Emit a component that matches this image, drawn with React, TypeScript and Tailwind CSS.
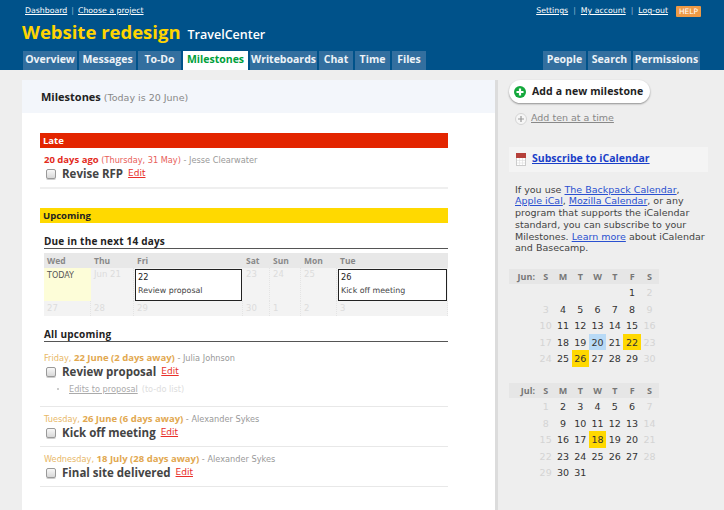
const F = "font-['DejaVu_Sans',sans-serif]";

function Tab({ label, w, active }: { label: string; w: number; active?: boolean }) {
  return (
    <div
      style={{ width: w }}
      className={
        active
          ? "h-[19px] bg-white text-[#00a03c] font-['Open_Sans',sans-serif] font-bold text-[10.5px] leading-[17px] text-center"
          : "h-[19px] bg-[#336f9f] text-[#eef3f7] font-['Open_Sans',sans-serif] font-bold text-[10.5px] leading-[17px] text-center"
      }
    >
      {label}
    </div>
  );
}

function Check() {
  return <div className="w-[10px] h-[10px] rounded-[2px] border border-[#999] bg-gradient-to-b from-[#f8f8f8] to-[#d8d8d8] shadow-[0_1px_0_#ccc]" />;
}

function Item({
  when,
  bold,
  rest,
  who,
  title,
  late,
  children,
  h,
}: {
  when: string;
  bold: string;
  rest?: string;
  who: string;
  title: string;
  late?: boolean;
  children?: React.ReactNode;
  h: number;
}) {
  return (
    <div style={{ height: h }} className={(late ? "border-b-2 border-[#efefef]" : "border-b border-[#e8e8e8]") + " pl-[4px] pt-[6px]"}>
      <div className="text-[8.2px] leading-[12px] whitespace-nowrap text-[#999]">
        <span className={late ? "text-[#e8403a]" : "text-[#e8b868]"}>{when}</span>
        <span className={late ? "text-[#e32b1d] font-['Open_Sans',sans-serif] font-bold text-[9.5px]" : "text-[#e2a850] font-['Open_Sans',sans-serif] font-bold text-[9.5px]"}>{bold}</span>
        {rest && <span className={late ? "text-[#e8605a]" : ""}>{rest}</span>}
        <span> - {who}</span>
      </div>
      <div className="flex items-center h-[16px]">
        <div className="ml-[2px] w-[16px] flex-none">
          <Check />
        </div>
        <span className="font-['Open_Sans',sans-serif] text-[11.5px] font-bold text-[#444] whitespace-nowrap">{title}</span>
        <a className="ml-[5px] text-[9px] text-[#e8302a] underline">Edit</a>
      </div>
      {children}
    </div>
  );
}

function MiniCal({ label, rows, mb }: { label: string; rows: (string | [string, string])[][]; mb?: number }) {
  const heads = ["S", "M", "T", "W", "T", "F", "S"];
  return (
    <div style={{ marginBottom: mb }} className="w-[150px]">
      <div className="flex h-[15px] bg-[#e6e6e6] items-center text-[9px] font-['Open_Sans',sans-serif] font-bold text-[#777]">
        <div className="w-[28px] text-right flex-none pr-[2px]">{label}</div>
        {heads.map((d, i) => (
          <div key={i} className="w-[17.3px] flex-none text-center">
            {d}
          </div>
        ))}
      </div>
      {rows.map((r, i) => (
        <div key={i} className="flex h-[16.5px] items-center text-[9.5px] text-[#333]">
          <div className="w-[28px] flex-none" />
          {r.map((c, j) => {
            const val = Array.isArray(c) ? c[0] : c;
            const hl = Array.isArray(c) ? c[1] : "";
            return (
              <div
                key={j}
                className={
                  "w-[17.3px] h-[16.5px] leading-[17px] flex-none text-center " +
                  (hl === "y" ? "bg-[#ffd800] " : hl === "b" ? "bg-[#b8daf6] " : "") +
                  (j === 0 || j === 6 ? "text-[#d4d4d4]" : "")
                }
              >
                {val}
              </div>
            );
          })}
        </div>
      ))}
    </div>
  );
}

const jun: (string | [string, string])[][] = [
  ["", "", "", "", "", "1", "2"],
  ["3", "4", "5", "6", "7", "8", "9"],
  ["10", "11", "12", "13", "14", "15", "16"],
  ["17", "18", "19", ["20", "b"], "21", ["22", "y"], "23"],
  ["24", "25", ["26", "y"], "27", "28", "29", "30"],
];
const jul: (string | [string, string])[][] = [
  ["1", "2", "3", "4", "5", "6", "7"],
  ["8", "9", "10", "11", "12", "13", "14"],
  ["15", "16", "17", ["18", "y"], "19", "20", "21"],
  ["22", "23", "24", "25", "26", "27", "28"],
  ["29", "30", "31", "", "", "", ""],
];

function CalCell({ t, cls }: { t: string; cls?: string }) {
  return <div className={"border-r border-dotted border-[#e4e4e4] bg-[#f3f3f3] text-[#dcdcdc] text-[8.5px] px-[3px] " + (cls || "")}>{t}</div>;
}

function EventCell({ n, t }: { n: string; t: string }) {
  return (
    <div className="border border-[#222] bg-white mx-px mt-px h-[32px] px-[2px] text-[7.9px] leading-[14px] text-[#444]">
      <div className="text-[#222] text-[8.2px]">{n}</div>
      <div>{t}</div>
    </div>
  );
}

export default function App() {
  return (
    <div className={F + " w-[724px] h-[510px] overflow-hidden bg-[#eeeeee]"}>
      <header className="h-[70px] bg-[#00528a] relative flex flex-col">
        <div className="flex justify-between h-[19px] pl-[25px] pr-[23px] pt-[5px] text-[7.8px] leading-[12px] text-white">
          <div className="flex gap-[4px]">
            <a className="underline">Dashboard</a>
            <span className="text-[#8fb3cf]">|</span>
            <a className="underline">Choose a project</a>
          </div>
          <div className="flex gap-[5px] items-start">
            <a className="underline">Settings</a>
            <span className="text-[#8fb3cf]">|</span>
            <a className="underline">My account</a>
            <span className="text-[#8fb3cf]">|</span>
            <a className="underline">Log-out</a>
            <span className="ml-[3px] mt-[1px] w-[25px] h-[11px] rounded-[1px] bg-[#ee9a45] text-[7.5px] leading-[11px] text-center text-[#fff]">HELP</span>
          </div>
        </div>
        <div className="flex items-baseline pl-[22px] h-[32px] font-['Open_Sans',sans-serif] font-bold">
          <span className="text-[18.5px] leading-[26px] text-[#ffd400] whitespace-nowrap">Website redesign</span>
          <span className="ml-[7px] text-[12.5px] font-semibold text-white whitespace-nowrap">TravelCenter</span>
        </div>
        <nav className="flex justify-between pl-[23px] pr-[24px]">
          <div className="flex gap-[2px]">
            <Tab label="Overview" w={54} />
            <Tab label="Messages" w={57} />
            <Tab label="To-Do" w={43} />
            <Tab label="Milestones" w={65} active />
            <Tab label="Writeboards" w={67} />
            <Tab label="Chat" w={34} />
            <Tab label="Time" w={35} />
            <Tab label="Files" w={34} />
          </div>
          <div className="flex gap-[2px]">
            <Tab label="People" w={43} />
            <Tab label="Search" w={43} />
            <Tab label="Permissions" w={67} />
          </div>
        </nav>
      </header>

      <div className="flex pt-[10px] pl-[22px]">
        <main className="w-[473px] h-[430px] bg-white flex-none">
          <div className="h-[33px] bg-[#f3f6fb] pl-[19px] pt-[10px] text-[10.5px] leading-[14px] whitespace-nowrap">
            <span className="font-['Open_Sans',sans-serif] font-bold text-[11px] text-[#222]">Milestones</span>
            <span className="text-[#888] text-[9.5px]"> (Today is 20 June)</span>
          </div>
          <div className="pl-[18px] w-[426px]">
            <div className="mt-[20px] h-[15px] bg-[#e32500] text-white font-['Open_Sans',sans-serif] text-[9.5px] font-bold leading-[15px] pl-[3px]">Late</div>
            <Item when="" bold="20 days ago" rest=" (Thursday, 31 May)" who="Jesse Clearwater" title="Revise RFP" late h={41} />
            <div className="mt-[19px] h-[15px] bg-[#ffd900] text-[#222] font-['Open_Sans',sans-serif] text-[9.5px] font-bold leading-[15px] pl-[3px]">Upcoming</div>
            <div className="mt-[5px] ml-[4px] h-[21px] flex items-end border-b border-[#555] font-['Open_Sans',sans-serif] text-[10px] tracking-[0.2px] font-bold leading-[14px] text-[#222]">Due in the next 14 days</div>
            <div className="ml-[4px] mt-[4px] grid grid-cols-[47px_43px_109px_27px_31px_36px_111px] grid-rows-[15px_33px_15px] text-[9px]">
              {["Wed", "Thu", "Fri", "Sat", "Sun", "Mon", "Tue"].map((d) => (
                <div key={d} className="bg-[#e8e8e8] text-[#888] px-[3px] leading-[15px] text-[8.5px] font-['Open_Sans',sans-serif] font-bold">
                  {d}
                </div>
              ))}
              <div className="bg-[#fdfdd8] text-[#555] text-[8px] pl-[3px] pt-[2px]">TODAY</div>
              <CalCell t="Jun 21" />
              <div className="bg-[#f3f3f3]">
                <EventCell n="22" t="Review proposal" />
              </div>
              <CalCell t="23" />
              <CalCell t="24" />
              <CalCell t="25" />
              <div className="bg-[#f3f3f3]">
                <EventCell n="26" t="Kick off meeting" />
              </div>
              {["27", "28", "29", "30", "1", "2", "3"].map((d) => (
                <CalCell key={d} t={d} cls="leading-[15px]" />
              ))}
            </div>
            <div className="mt-[6px] ml-[4px] h-[20px] flex items-end border-b border-[#555] font-['Open_Sans',sans-serif] text-[10px] tracking-[0.2px] font-bold leading-[14px] text-[#222]">All upcoming</div>
            <div className="mt-[4px]">
              <Item when="Friday, " bold="22 June (2 days away)" who="Julia Johnson" title="Review proposal" h={61}>
                <div className="flex items-center h-[14px] mt-[2px] text-[8.2px] whitespace-nowrap pl-[13px]">
                  <span className="w-[2px] h-[2px] bg-[#ccc] mr-[10px]" />
                  <a className="underline text-[#aaa]">Edits to proposal</a>
                  <span className="text-[#ddd] ml-[4px]">(to-do list)</span>
                </div>
              </Item>
              <Item when="Tuesday, " bold="26 June (6 days away)" who="Alexander Sykes" title="Kick off meeting" h={40} />
              <Item when="Wednesday, " bold="18 July (28 days away)" who="Alexander Sykes" title="Final site delivered" h={40} />
            </div>
          </div>
        </main>

        <aside className="w-[226px] flex-none h-[430px] border-l-[3px] border-[#dcdcdc] pl-[11px]">
          <div className="inline-flex items-center h-[23px] w-[141px] rounded-full bg-white shadow-[0_1px_2px_rgba(0,0,0,0.4)] pl-[5px]">
            <svg width="12" height="12" viewBox="0 0 12 12" className="flex-none">
              <circle cx="6" cy="6" r="6" fill="#14a83c" />
              <path d="M6 2.5v7M2.5 6h7" stroke="#fff" strokeWidth="2.2" />
            </svg>
            <span className="ml-[6px] font-['Open_Sans',sans-serif] text-[10.5px] tracking-[0.1px] font-bold text-[#222] whitespace-nowrap">Add a new milestone</span>
          </div>
          <div className="flex items-center mt-[7px] ml-[6px] h-[14px]">
            <svg width="12" height="12" viewBox="0 0 12 12" className="flex-none">
              <circle cx="6" cy="6" r="5.5" fill="#f6f6f6" stroke="#d4d4d4" />
              <path d="M6 3v6M3 6h6" stroke="#999" strokeWidth="1.2" />
            </svg>
            <a className="ml-[4px] text-[9.5px] text-[#888] underline whitespace-nowrap">Add ten at a time</a>
          </div>
          <div className="mt-[21px] w-[199px] h-[25px] bg-[#f4f4f4] flex items-center pl-[7px]">
            <svg width="10" height="13" viewBox="0 0 10 13" className="flex-none">
              <rect x="0.5" y="0.5" width="9" height="12" fill="#fff" stroke="#ccc" />
              <rect x="0" y="0" width="10" height="5" fill="#b5403a" />
              <path d="M1 7.5h8M1 10h8M3.5 5v7M6.5 5v7" stroke="#ddd" strokeWidth="0.6" />
            </svg>
            <a className="ml-[6px] font-['Open_Sans',sans-serif] text-[10.5px] font-bold text-[#1a3fc8] underline whitespace-nowrap">Subscribe to iCalendar</a>
          </div>
          <p className="mt-[12px] ml-[6px] w-[200px] text-[9.5px] leading-[11.8px] text-[#444] whitespace-nowrap">
            If you use <a className="text-[#2a50d0] underline">The Backpack Calendar</a>,
            <br />
            <a className="text-[#2a50d0] underline">Apple iCal</a>, <a className="text-[#2a50d0] underline">Mozilla Calendar</a>, or any
            <br />
            program that supports the iCalendar
            <br />
            standard, you can subscribe to your
            <br />
            Milestones. <a className="text-[#2a50d0] underline">Learn more</a> about iCalendar
            <br />
            and Basecamp.
          </p>
          <div className="mt-[15px]">
            <MiniCal label="Jun:" rows={jun} mb={16.5} />
            <MiniCal label="Jul:" rows={jul} />
          </div>
        </aside>
      </div>
    </div>
  );
}
